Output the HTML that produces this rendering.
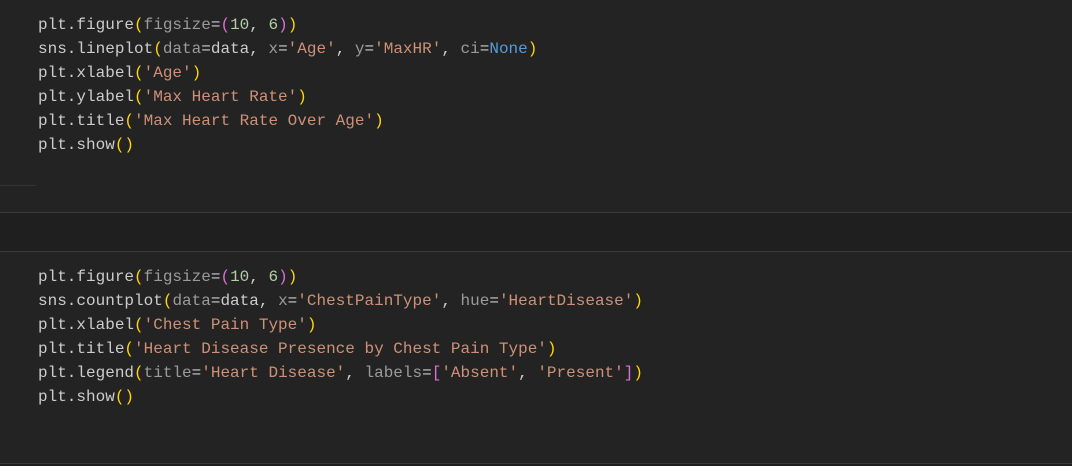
<html><head><style>
body{margin:0;width:1072px;height:466px;background:#1f1f1f;overflow:hidden;font-family:"Liberation Mono",monospace;font-size:16px;}
.cell{position:absolute;left:0;width:1072px;background:#232323;}
pre{margin:0;position:absolute;left:38px;font:inherit;line-height:24px;color:#cccccc;}
.p{color:#9b9b9b}.s{color:#ce9178}.n{color:#b5cea8}.y{color:#ffd700}.m{color:#da70d6}.b{color:#569cd6}
.hl{position:absolute;height:1px;background:#3a3a3a;left:0;width:1072px}
</style></head><body>
<div class="cell" style="top:0;height:212px"></div>
<div class="cell" style="top:252px;height:211px"></div>
<div class="hl" style="top:212px"></div>
<div class="hl" style="top:251px"></div>
<div class="hl" style="top:463px"></div>
<div style="position:absolute;top:185px;left:0;width:36px;height:1px;background:#333"></div>
<pre style="top:13px">plt.figure<span class="y">(</span><span class="p">figsize</span>=<span class="m">(</span><span class="n">10</span>, <span class="n">6</span><span class="m">)</span><span class="y">)</span>
sns.lineplot<span class="y">(</span><span class="p">data</span>=data, <span class="p">x</span>=<span class="s">'Age'</span>, <span class="p">y</span>=<span class="s">'MaxHR'</span>, <span class="p">ci</span>=<span class="b">None</span><span class="y">)</span>
plt.xlabel<span class="y">(</span><span class="s">'Age'</span><span class="y">)</span>
plt.ylabel<span class="y">(</span><span class="s">'Max Heart Rate'</span><span class="y">)</span>
plt.title<span class="y">(</span><span class="s">'Max Heart Rate Over Age'</span><span class="y">)</span>
plt.show<span class="y">()</span></pre>
<pre style="top:265px">plt.figure<span class="y">(</span><span class="p">figsize</span>=<span class="m">(</span><span class="n">10</span>, <span class="n">6</span><span class="m">)</span><span class="y">)</span>
sns.countplot<span class="y">(</span><span class="p">data</span>=data, <span class="p">x</span>=<span class="s">'ChestPainType'</span>, <span class="p">hue</span>=<span class="s">'HeartDisease'</span><span class="y">)</span>
plt.xlabel<span class="y">(</span><span class="s">'Chest Pain Type'</span><span class="y">)</span>
plt.title<span class="y">(</span><span class="s">'Heart Disease Presence by Chest Pain Type'</span><span class="y">)</span>
plt.legend<span class="y">(</span><span class="p">title</span>=<span class="s">'Heart Disease'</span>, <span class="p">labels</span>=<span class="m">[</span><span class="s">'Absent'</span>, <span class="s">'Present'</span><span class="m">]</span><span class="y">)</span>
plt.show<span class="y">()</span></pre>
</body></html>
